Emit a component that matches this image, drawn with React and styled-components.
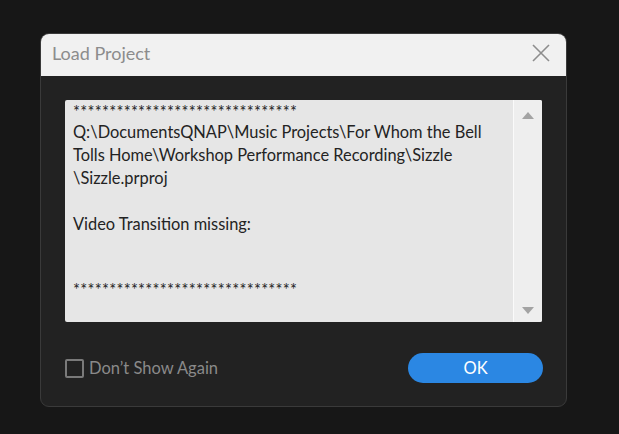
import React from "react";
import styled, { createGlobalStyle } from "styled-components";

const GlobalStyle = createGlobalStyle`
  html, body {
    margin: 0;
    padding: 0;
    background: #171717;
    font-family: "Lato", "Open Sans", sans-serif;
  }
`;

const Page = styled.div`
  width: 619px;
  height: 434px;
  padding: 33px 0 0 40px;
  box-sizing: border-box;
`;

const Dialog = styled.div`
  width: 527px;
  height: 374px;
  box-sizing: border-box;
  border: 1px solid #3a3a3a;
  border-radius: 9px;
  background: #222222;
  overflow: hidden;
  display: flex;
  flex-direction: column;
`;

const TitleBar = styled.div`
  height: 42px;
  box-sizing: border-box;
  background: #f1f1f1;
  display: flex;
  align-items: center;
  justify-content: space-between;
  padding: 0 15px 4px 11px;
`;

const Title = styled.span`
  font-size: 18px;
  color: #8c8c8c;
`;

const CloseButton = styled.button`
  border: none;
  background: transparent;
  padding: 0;
  width: 20px;
  height: 20px;
  display: flex;
  align-items: center;
  justify-content: center;
  cursor: pointer;
`;

const Body = styled.div`
  flex: 1;
  display: flex;
  flex-direction: column;
  padding: 24px 24px 23px 24px;
`;

const MessageBox = styled.div`
  height: 222px;
  display: flex;
  background: #e6e6e6;
  border-radius: 2px;
  overflow: hidden;
`;

const MessageText = styled.div`
  flex: 1;
  padding: 3px 8px 0;
  font-size: 16.4px;
  line-height: 23px;
  color: #232323;
  white-space: pre;
`;

const Stars = styled.div`
  line-height: 17px;
  letter-spacing: 0.27px;
`;

const Scrollbar = styled.div`
  width: 28px;
  background: #eeeeee;
  border-left: 1px solid #fafafa;
  display: flex;
  flex-direction: column;
  justify-content: space-between;
  align-items: center;
  padding: 12px 0 8px;
`;

const Arrow = styled.div`
  width: 0;
  height: 0;
  border-left: 6px solid transparent;
  border-right: 6px solid transparent;
  ${(p) =>
    p.$down
      ? "border-top: 7px solid #a3a3a3;"
      : "border-bottom: 7px solid #a3a3a3;"}
`;

const Footer = styled.div`
  margin-top: auto;
  display: flex;
  align-items: center;
  justify-content: space-between;
`;

const CheckLabel = styled.label`
  display: flex;
  align-items: center;
  gap: 5px;
  font-size: 16.5px;
  color: #8a8a8a;
  cursor: pointer;
`;

const CheckBox = styled.span`
  width: 15px;
  height: 15px;
  border: 2px solid #7a7a7a;
  border-radius: 2px;
`;

const OkButton = styled.button`
  width: 135px;
  height: 30px;
  margin-right: -1px;
  border: none;
  border-radius: 15px;
  background: #2b87e3;
  color: #ffffff;
  font-family: inherit;
  font-size: 16.5px;
  cursor: pointer;
`;

const App = () => {
  const stars = "*".repeat(31);
  return (
    <>
      <GlobalStyle />
      <Page>
        <Dialog>
          <TitleBar>
            <Title>Load Project</Title>
            <CloseButton aria-label="Close">
              <svg width="18" height="18" viewBox="0 0 18 18">
                <path d="M1 1 L17 17 M17 1 L1 17" stroke="#8d8d8d" strokeWidth="1.6" />
              </svg>
            </CloseButton>
          </TitleBar>
          <Body>
            <MessageBox>
              <MessageText>
                <Stars>{stars}</Stars>
                {"Q:\\DocumentsQNAP\\Music Projects\\For Whom the Bell\nTolls Home\\Workshop Performance Recording\\Sizzle\n\\Sizzle.prproj\n\nVideo Transition missing:\n\n\n"}
                <Stars>{stars}</Stars>
              </MessageText>
              <Scrollbar>
                <Arrow />
                <Arrow $down />
              </Scrollbar>
            </MessageBox>
            <Footer>
              <CheckLabel>
                <CheckBox />
                Don’t Show Again
              </CheckLabel>
              <OkButton>OK</OkButton>
            </Footer>
          </Body>
        </Dialog>
      </Page>
    </>
  );
};

export default App;
